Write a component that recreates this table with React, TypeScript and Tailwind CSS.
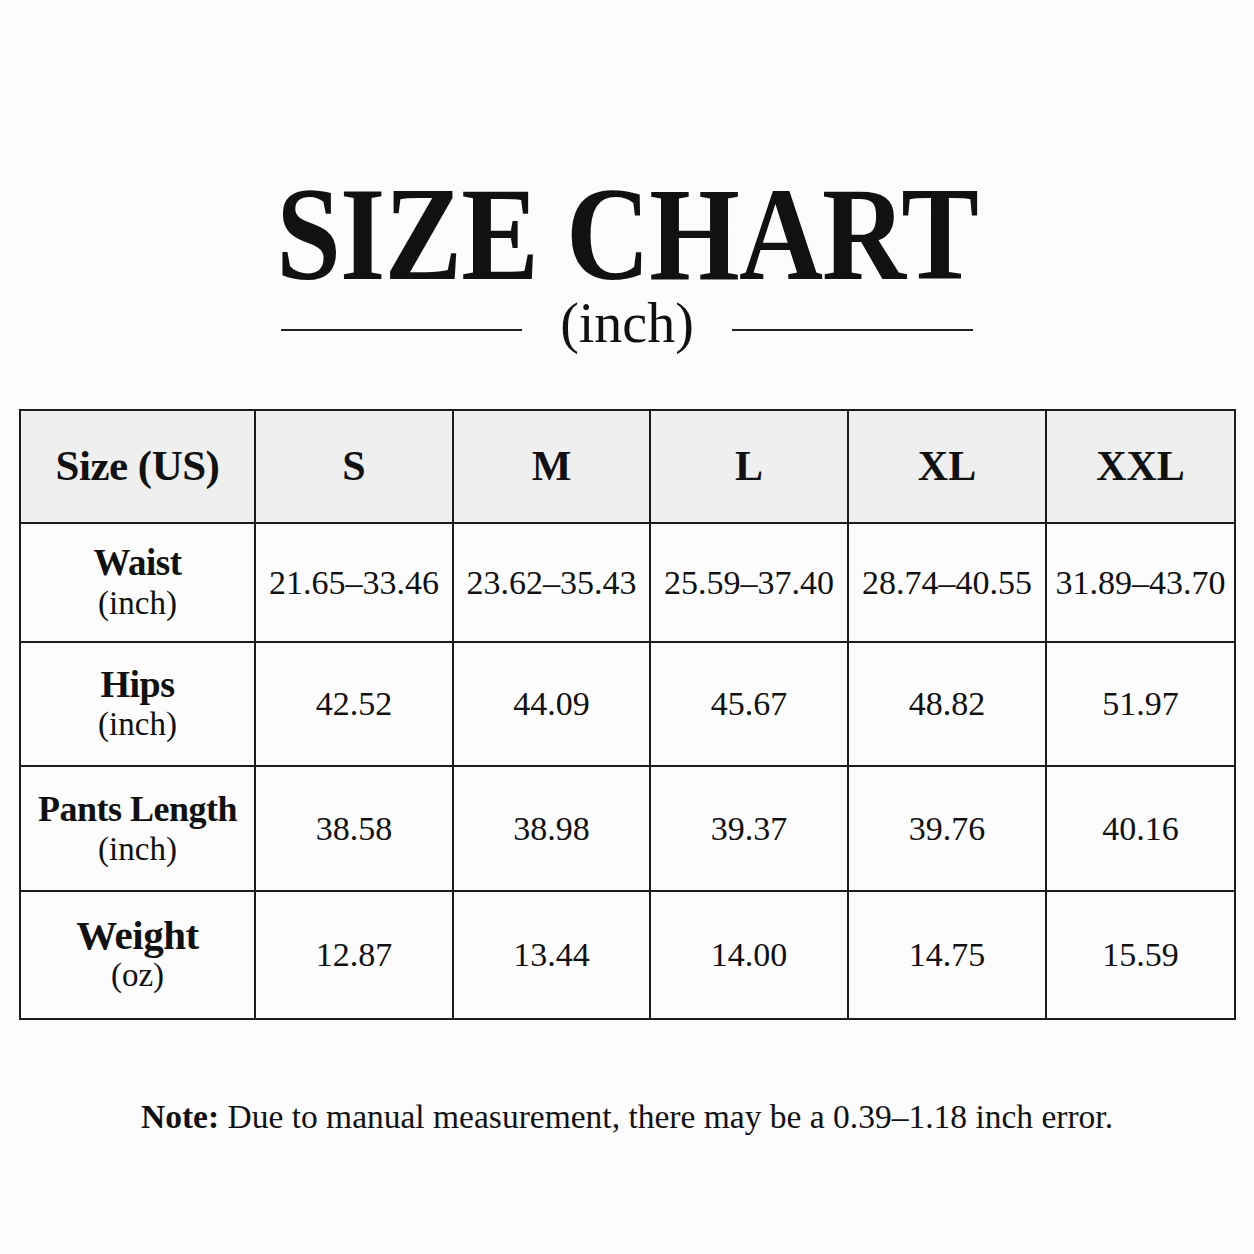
const serif = { fontFamily: '"Liberation Serif", "Times New Roman", serif' }

const sizes = ['S', 'M', 'L', 'XL', 'XXL']

// label, unit, label font size class, values
const rows = [
  { label: 'Waist', unit: '(inch)', big: 'text-[37px]', h: 'h-[119px]', values: ['21.65–33.46', '23.62–35.43', '25.59–37.40', '28.74–40.55', '31.89–43.70'] },
  { label: 'Hips', unit: '(inch)', big: 'text-[38px]', h: 'h-[124px]', values: ['42.52', '44.09', '45.67', '48.82', '51.97'] },
  { label: 'Pants Length', unit: '(inch)', big: 'text-[36px]', h: 'h-[125px]', values: ['38.58', '38.98', '39.37', '39.76', '40.16'] },
  { label: 'Weight', unit: '(oz)', big: 'text-[41px]', h: 'h-[126px]', values: ['12.87', '13.44', '14.00', '14.75', '15.59'] },
]

const colW = ['w-[235px]', 'w-[198px]', 'w-[197px]', 'w-[198px]', 'w-[198px]', 'w-[187px]']

export default function App() {
  return (
    <div className="h-[1254px] w-[1254px] bg-[#fcfcfc] text-[#111]" style={serif}>
      {/* title */}
      <div className="pt-[170px] text-center">
        <h1 className="inline-block origin-center scale-x-[0.875] text-[133px] font-bold leading-[128px] tracking-[-1px]">
          SIZE CHART
        </h1>
      </div>
      <div className="flex items-center justify-center">
        <div className="mt-[14px] h-[2px] w-[241px] bg-[#222]" />
        <span className="mx-[38px] text-[56px] leading-[50px]">(inch)</span>
        <div className="mt-[14px] h-[2px] w-[241px] bg-[#222]" />
      </div>

      {/* table */}
      <div className="ml-[19px] mt-[61px] w-[1217px] border-2 border-[#1c1c1c]">
        <div className="flex h-[113px] border-b-2 border-[#1c1c1c] bg-[#efefef]">
          <div className={`${colW[0]} flex items-center justify-center border-r-2 border-[#1c1c1c]`}>
            <span className="text-[43px] font-bold tracking-[-0.5px]">Size (US)</span>
          </div>
          {sizes.map((s, i) => (
            <div
              key={s}
              className={`${colW[i + 1]} flex items-center justify-center ${i < 4 ? 'border-r-2 border-[#1c1c1c]' : ''}`}
            >
              <span className="text-[42px] font-bold">{s}</span>
            </div>
          ))}
        </div>
        {rows.map((r, ri) => (
          <div key={r.label} className={`flex ${r.h} ${ri < 3 ? 'border-b-2 border-[#1c1c1c]' : ''}`}>
            <div className={`${colW[0]} flex flex-col items-center justify-center border-r-2 border-[#1c1c1c]`}>
              <span className={`${r.big} font-bold leading-[40px] tracking-[-0.5px]`}>{r.label}</span>
              <span className="text-[33px] leading-[40px]">{r.unit}</span>
            </div>
            {r.values.map((v, i) => (
              <div
                key={i}
                className={`${colW[i + 1]} flex items-center justify-center ${i < 4 ? 'border-r-2 border-[#1c1c1c]' : ''}`}
              >
                <span className="text-[34px] leading-[40px]">{v}</span>
              </div>
            ))}
          </div>
        ))}
      </div>

      {/* note */}
      <p className="mt-[77px] text-center text-[33.5px] leading-[40px]">
        <span className="font-bold">Note:</span> Due to manual measurement, there may be a 0.39–1.18 inch error.
      </p>
    </div>
  )
}
